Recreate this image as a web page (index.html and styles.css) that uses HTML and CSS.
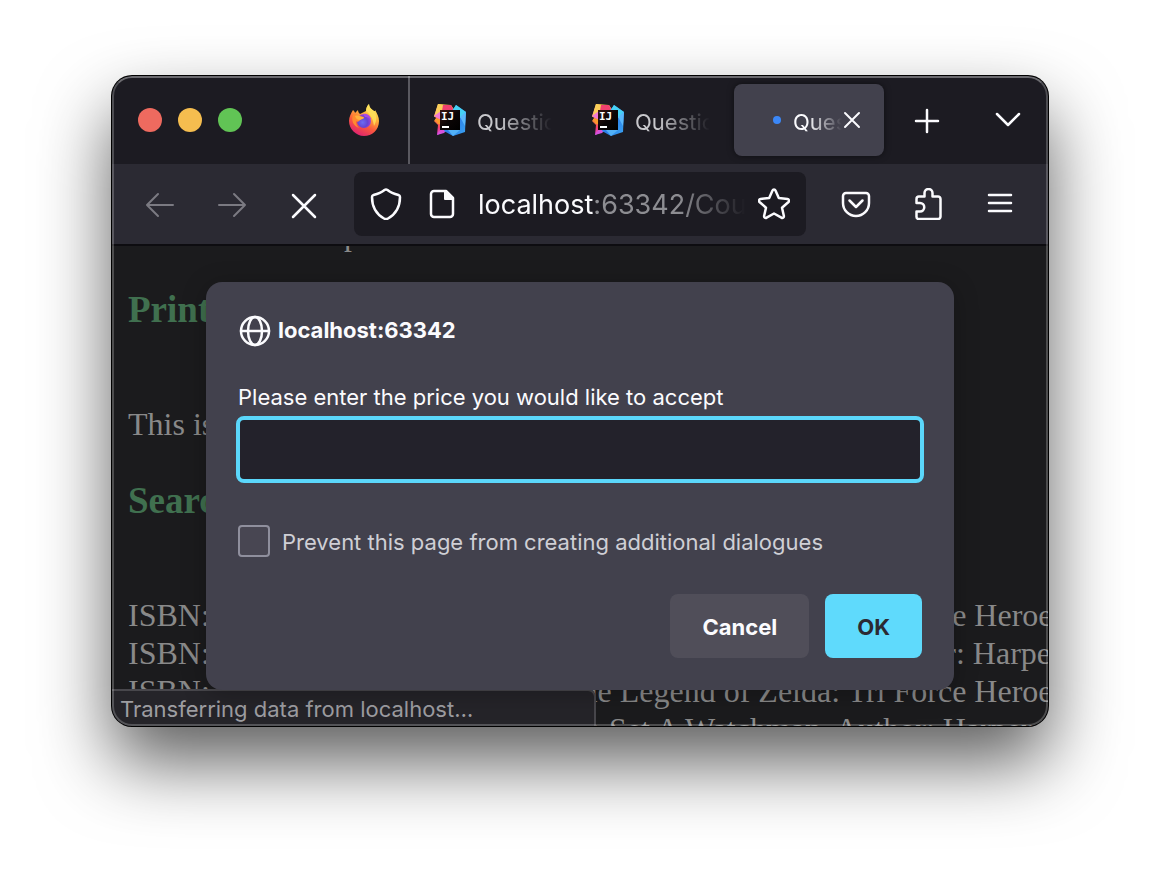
FILE: index.html
```html
<!DOCTYPE html>
<html lang="en">
<head>
<meta charset="utf-8">
<title>Browser prompt</title>
<link rel="stylesheet" href="styles.css">
</head>
<body>
<svg class="defs" aria-hidden="true">
  <defs>
    <linearGradient id="ij-left" x1="0" y1="0" x2="0" y2="1"><stop offset="0" stop-color="#fdd44c"/><stop offset=".3" stop-color="#f56a9a"/><stop offset=".5" stop-color="#f9932e"/><stop offset=".75" stop-color="#f5406c"/><stop offset="1" stop-color="#d847e8"/></linearGradient>
    <linearGradient id="ij-right" x1="0" y1="0" x2="1" y2="1"><stop offset="0" stop-color="#35c7f5"/><stop offset=".5" stop-color="#2b7ce9"/><stop offset="1" stop-color="#3aa6f2"/></linearGradient>
    <linearGradient id="ij-box" x1="0" y1="0" x2="1" y2="1"><stop offset="0" stop-color="#3a1512"/><stop offset=".5" stop-color="#0b0505"/><stop offset="1" stop-color="#000"/></linearGradient>
    <linearGradient id="fox-body" x1=".8" y1="0" x2=".3" y2="1"><stop offset="0" stop-color="#fff36b"/><stop offset=".35" stop-color="#ffb43a"/><stop offset=".65" stop-color="#fb5a3c"/><stop offset="1" stop-color="#dc1f74"/></linearGradient>
    <radialGradient id="fox-globe" cx=".4" cy=".6" r=".6"><stop offset="0" stop-color="#6b6cf2"/><stop offset=".6" stop-color="#6545d2"/><stop offset="1" stop-color="#a33fd8"/></radialGradient>
    <symbol id="ij" viewBox="0 0 32 32">
      <path d="M4 0l13 1 4 6-6 19-12 5 1-10-4-4 2-3-2-2z" fill="url(#ij-left)"/>
      <path d="M4 0l6 1-2 9-8 3z" fill="#fbcf5a"/>
      <path d="M9 1l8 0 3 6-12 0z" fill="#f0416e"/>
      <path d="M0 12l7-5 0 9z" fill="#f178d5"/>
      <path d="M1 15l6 0 0 5-3 0z" fill="#fb9a2b"/>
      <path d="M7 25l7 0-4 4-7 2z" fill="#d553dc"/>
      <path d="M22 1l10 7-1 20-12 4-9-5 8-20z" fill="url(#ij-right)"/>
      <path d="M22 1l10 7-5 6-9-7z" fill="#46d1f5"/>
      <path d="M26 13l6-5-1 14z" fill="#5ab8fb"/>
      <path d="M14 26l12 0-7 6z" fill="#52b1f7"/>
      <rect x="6" y="6" width="20" height="20" fill="url(#ij-box)"/>
      <text x="7" y="16" class="ij-text">IJ</text>
      <rect x="8" y="22" width="7" height="2" fill="#fff"/>
    </symbol>
  </defs>
</svg>
<main class="window">
  <header class="tabstrip">
    <div class="leading">
      <div class="lights">
        <button class="light red" aria-label="Close window"></button>
        <button class="light yellow" aria-label="Minimise window"></button>
        <button class="light green" aria-label="Zoom window"></button>
      </div>
      <button class="pinned" aria-label="Firefox View">
        <svg width="32" height="32" viewBox="0 0 32 32">
          <path d="M5 6c1 1 2 2 2 3l3-3c0 2 1 3 2 4 2-1 4-2 6-3 0-3 1-5 3-7 0 3 2 5 5 7 1 0 1 0 1-1 2 3 4 7 4 11 0 9-7 15-15 15S1 25 1 17c0-4 2-8 4-11z" fill="url(#fox-body)"/>
          <path d="M21 0c0 3 2 5 5 7 3 4 3 10 0 15-1-7-3-11-8-15 0-3 1-5 3-7z" fill="#ffe45c" opacity=".8"/>
          <circle cx="16" cy="17" r="7" fill="url(#fox-globe)"/>
          <path d="M5 11c3-1 5 0 7 1 2 0 4 1 4 2-1 1-3 1-4 2-1 2-3 2-4 1 0 3 1 5 3 7-6-2-8-8-6-13z" fill="#ff8a2f"/>
          <path d="M7 12c3-1 5 0 6 1 2 0 3 0 3 1-1 1-3 1-4 2-2 0-4-1-5-4z" fill="#ffb13e"/>
          <path d="M15 10c4-1 8 2 8 6-2-3-4-3-6-3z" fill="#a84ae6"/>
        </svg>
      </button>
    </div>
    <nav class="tabs" aria-label="Tabs">
      <button class="tab"><svg width="32" height="32"><use href="#ij"/></svg><span class="tab-title">Question</span></button>
      <button class="tab"><svg width="32" height="32"><use href="#ij"/></svg><span class="tab-title">Question</span></button>
      <div class="tab active">
        <span class="busy"></span><span class="tab-title">Question</span>
        <button class="tab-close" aria-label="Close tab"><svg class="line" width="20" height="20" viewBox="0 0 20 20"><path d="M3 3l14 14M17 3L3 17"/></svg></button>
      </div>
    </nav>
    <button class="tool new-tab" aria-label="New tab"><svg class="line" width="28" height="28" viewBox="0 0 28 28"><path class="heavy" d="M14 4v22M3 15h22"/></svg></button>
    <button class="tool all-tabs" aria-label="List all tabs"><svg class="line" width="28" height="28" viewBox="0 0 28 28"><path class="heavy" d="M3 8l11 11L25 8"/></svg></button>
  </header>

  <div class="toolbar">
    <button class="tool dim" aria-label="Back"><svg class="line" width="32" height="32" viewBox="0 0 32 32"><path d="M29 17H3M14 6L3 17l11 11"/></svg></button>
    <button class="tool dim" aria-label="Forward"><svg class="line" width="32" height="32" viewBox="0 0 32 32"><path d="M3 17h26M18 6l11 11-11 11"/></svg></button>
    <button class="tool" aria-label="Stop"><svg class="line" width="32" height="32" viewBox="0 0 32 32"><path class="heavy" d="M5 7l22 22M27 7L5 29"/></svg></button>
    <div class="urlbar">
      <svg class="line" width="32" height="32" viewBox="0 0 32 32"><path class="heavy" d="M14.500 2c1-.7 2-.7 3 0 3 2.500 7 4 11 5 1 .3 1.500 1 1.500 2 0 10-4 17-12 21.500-1.300.7-2.700.7-4 0C6 26 2 19 2 9c0-1 .5-1.700 1.500-2 4-1 8-2.500 11-5z"/></svg>
      <svg class="line page-icon" width="32" height="32" viewBox="0 0 32 32"><path class="heavy" d="M9 3h11l7 7v16a3 3 0 0 1-3 3H8a3 3 0 0 1-3-3V6a3 3 0 0 1 3-3z"/><path class="solid" d="M18 2v9a1 1 0 0 0 1 1h9z"/></svg>
      <div class="url" role="textbox" aria-label="Address" tabindex="0"><span class="host">localhost</span>:63342/Cou</div>
      <svg class="line" width="32" height="32" viewBox="0 0 32 32"><path class="heavy" d="M14.500 2.500c.6-1.300 2.400-1.300 3 0l3.300 7.500 8.700 1c1.500.2 2 2 1 3l-6.500 5.700 1.900 8.300c.2 1.600-1.300 2.400-2.500 1.600L16 25.500l-7.400 4.100c-1.200.8-2.700 0-2.500-1.600L8 19.700 1.500 14c-1-1-.5-2.800 1-3l8.700-1z"/></svg>
    </div>
    <button class="tool" aria-label="Save to Pocket"><svg class="line" width="32" height="32" viewBox="0 0 32 32"><path class="heavy" d="M6 5h20a3 3 0 0 1 3 3v7a13 13 0 0 1-26 0V8a3 3 0 0 1 3-3zM9.500 12.500L16 19l6.500-6.500"/></svg></button>
    <button class="tool" aria-label="Extensions"><svg class="line" width="32" height="32" viewBox="0 0 32 32"><path class="heavy" d="M6 31h20a2.500 2.500 0 0 0 2.500-2.500V11A2.500 2.500 0 0 0 26 8.500h-5.500V5a4 4 0 0 0-8 0v3.500H7A2.500 2.500 0 0 0 4.500 11v4H8a4 4 0 0 1 0 8.500H4.500v5A2.500 2.500 0 0 0 6 31z"/></svg></button>
    <button class="tool" aria-label="Menu"><svg class="line" width="32" height="32" viewBox="0 0 32 32"><path class="heavy" d="M5 7h22M5 15h22M5 23h22"/></svg></button>
  </div>

  <section class="viewport">
    <div class="document">
      <p class="intro">p</p>
      <h3>Print</h3>
      <p>This is</p>
      <h3>Search</h3>
      <div class="listing">
        <p class="book"><span>ISBN:</span><span>The Legend of Zelda: Tri Force Heroes</span></p>
        <p class="book late"><span>ISBN:</span><span>Go Set A Watchman, Author: Harper</span></p>
        <p class="book"><span>ISBN:</span><span>The Legend of Zelda: Tri Force Heroes</span></p>
        <p class="book"><span>ISBN:</span><span>Go Set A Watchman, Author: Harper</span></p>
      </div>
    </div>
    <div class="status" role="status">Transferring data from localhost…</div>
    <div class="modal-layer">
      <form class="dialog" role="dialog" aria-labelledby="origin">
        <div class="origin">
          <svg class="line" width="34" height="34" viewBox="0 0 34 34"><g class="heavy"><circle cx="17" cy="17" r="14"/><ellipse cx="17" cy="17" rx="7" ry="14"/><path d="M3 17h28"/></g></svg>
          <strong id="origin">localhost:63342</strong>
        </div>
        <label class="question" for="price">Please enter the price you would like to accept</label>
        <input class="answer" id="price" type="text">
        <div class="prevent">
          <input class="check" id="prevent" type="checkbox">
          <label for="prevent">Prevent this page from creating additional dialogues</label>
        </div>
        <div class="actions">
          <button class="action" type="button">Cancel</button>
          <button class="action primary" type="button">OK</button>
        </div>
      </form>
    </div>
  </section>
</main>
</body>
</html>
```
FILE: styles.css
```css
* { box-sizing: border-box; }

body {
  margin: 0;
  height: 100vh;
  padding: 76px 112px 148px;
  display: flex;
  background: #fff;
  color: #fbfbfe;
  font: 22px/26px Inter, "Liberation Sans", sans-serif;
}

button {
  border: 0;
  padding: 0;
  background: none;
  color: inherit;
  font: inherit;
}

p, h3 { margin: 0; }
svg { display: block; flex: none; }

.defs { position: absolute; width: 0; height: 0; }

.ij-text { font: bold 11px "DejaVu Sans Mono", monospace; fill: #fff; }

.line {
  fill: none;
  stroke: currentColor;
  stroke-width: 2;
  stroke-linecap: round;
  stroke-linejoin: round;
}
.heavy { stroke-width: 2.5; }
.solid { fill: currentColor; stroke: none; }

/* Window frame */
.window {
  position: relative;
  flex: 1;
  min-width: 0;
  display: flex;
  flex-direction: column;
  overflow: hidden;
  border-radius: 20px;
  background: #1c1b22;
  box-shadow: 0 0 0 1px #000, 0 36px 72px rgba(0, 0, 0, .64);
}
.window::after {
  content: "";
  position: absolute;
  inset: 0;
  border: 2px solid rgba(255, 255, 255, .22);
  border-top-color: rgba(255, 255, 255, .35);
  border-radius: 20px;
  pointer-events: none;
}

/* Tab strip */
.tabstrip { flex: none; display: flex; align-items: center; height: 88px; }
.leading {
  flex: none;
  width: 298px;
  height: 100%;
  padding: 0 28px 0 26px;
  display: flex;
  align-items: center;
  justify-content: space-between;
  border-right: 2px solid #5a5960;
}
.lights { display: flex; gap: 16px; }
.light { width: 24px; height: 24px; border-radius: 50%; }
.red { background: #ee6a5f; }
.yellow { background: #f5bd4f; }
.green { background: #61c455; }

.tabs { display: flex; min-width: 0; }
.tab {
  width: 158px;
  height: 72px;
  padding: 0 16px 0 24px;
  display: flex;
  align-items: center;
  gap: 11px;
  text-align: left;
}
.tab-title {
  flex: 1;
  min-width: 0;
  padding-top: 4px;
  overflow: hidden;
  white-space: nowrap;
  color: #c8c8cc;
  -webkit-mask-image: linear-gradient(90deg, #000 30%, transparent);
  mask-image: linear-gradient(90deg, #000 30%, transparent);
}
.tab.active {
  width: 150px;
  margin-left: 8px;
  padding: 0 22px 0 39px;
  gap: 0;
  border-radius: 8px;
  background: #42414d;
  box-shadow: 0 0 6px rgba(0, 0, 0, .5);
}
.active .tab-title { margin-left: 12px; color: #fbfbfe; }
.busy { width: 8px; height: 8px; border-radius: 50%; background: #3b87f7; }
.tab-close { flex: none; }

.tool {
  flex: none;
  width: 72px;
  height: 72px;
  display: flex;
  align-items: center;
  justify-content: center;
}
.new-tab { margin-left: 7px; }
.all-tabs { margin: 0 4px 0 auto; }
.dim { color: #7b7a82; }

/* Navigation toolbar */
.toolbar {
  flex: none;
  height: 82px;
  padding: 0 12px;
  display: flex;
  align-items: center;
  background: #2b2a33;
  border-bottom: 2px solid #0d0c10;
}
.urlbar {
  flex: 1;
  min-width: 0;
  height: 64px;
  margin: 0 14px;
  padding: 0 16px;
  display: flex;
  align-items: center;
  border-radius: 8px;
  background: #1c1b22;
}
.page-icon { margin: 0 20px 0 24px; }
.url {
  flex: 1;
  min-width: 0;
  margin-right: 12px;
  padding-top: 2px;
  overflow: hidden;
  white-space: nowrap;
  font-size: 27px;
  line-height: 34px;
  color: #8d8d92;
  -webkit-mask-image: linear-gradient(90deg, #000 75%, transparent);
  mask-image: linear-gradient(90deg, #000 75%, transparent);
}
.host { color: #fbfbfe; }

/* Page content, dimmed behind the prompt */
.viewport {
  position: relative;
  flex: 1;
  min-height: 0;
  overflow: hidden;
  background: #1b1b1d;
}
.document {
  margin-top: -31px;
  padding-left: 16px;
  color: #898989;
  font: 32px/38px "Liberation Serif", serif;
  white-space: nowrap;
}
.document h3 {
  margin: 36px 0 74px;
  color: #40704f;
  font-size: 37px;
  line-height: 42px;
}
.document h3 + p + h3 { margin-top: 37px; }
.intro { padding-left: 216px; }
.book { display: grid; grid-template-columns: 434px 1fr; }
.late { grid-template-columns: 464px 1fr; }

.status {
  position: absolute;
  left: 0;
  bottom: 0;
  width: 484px;
  height: 37px;
  padding: 5px 8px;
  border: solid #48474c;
  border-width: 2px 2px 0 0;
  border-top-right-radius: 8px;
  background: #252429;
  color: #9d9da1;
}

/* Prompt */
.modal-layer {
  position: absolute;
  inset: 0;
  padding: 36px 94px 0;
}
.dialog {
  display: flex;
  flex-direction: column;
  padding: 32px;
  border-radius: 16px;
  background: #42414d;
  box-shadow: 0 4px 24px rgba(0, 0, 0, .25);
}
.origin { display: flex; align-items: center; gap: 6px; margin-bottom: 36px; }
.origin strong { padding-bottom: 2px; font-weight: 700; }
.answer {
  height: 67px;
  margin: 6px -2px 42px;
  padding: 0 16px;
  border: 4px solid #5bd7fb;
  border-radius: 8px;
  outline: 0;
  background: #23222b;
  color: inherit;
  font: inherit;
}
.prevent { display: flex; align-items: center; gap: 12px; color: #cfcfd5; }
.prevent label { padding-top: 2px; }
.check {
  appearance: none;
  flex: none;
  width: 32px;
  height: 32px;
  margin: 0;
  border: 2px solid #8f8f9d;
  border-radius: 4px;
  background: #484652;
}
.actions { display: flex; justify-content: flex-end; gap: 16px; margin-top: 37px; }
.action {
  height: 64px;
  padding: 2px 32px 0;
  border-radius: 8px;
  background: #504e59;
  font-weight: 700;
}
.primary { background: #5fdafc; color: #2b2a33; }
```
